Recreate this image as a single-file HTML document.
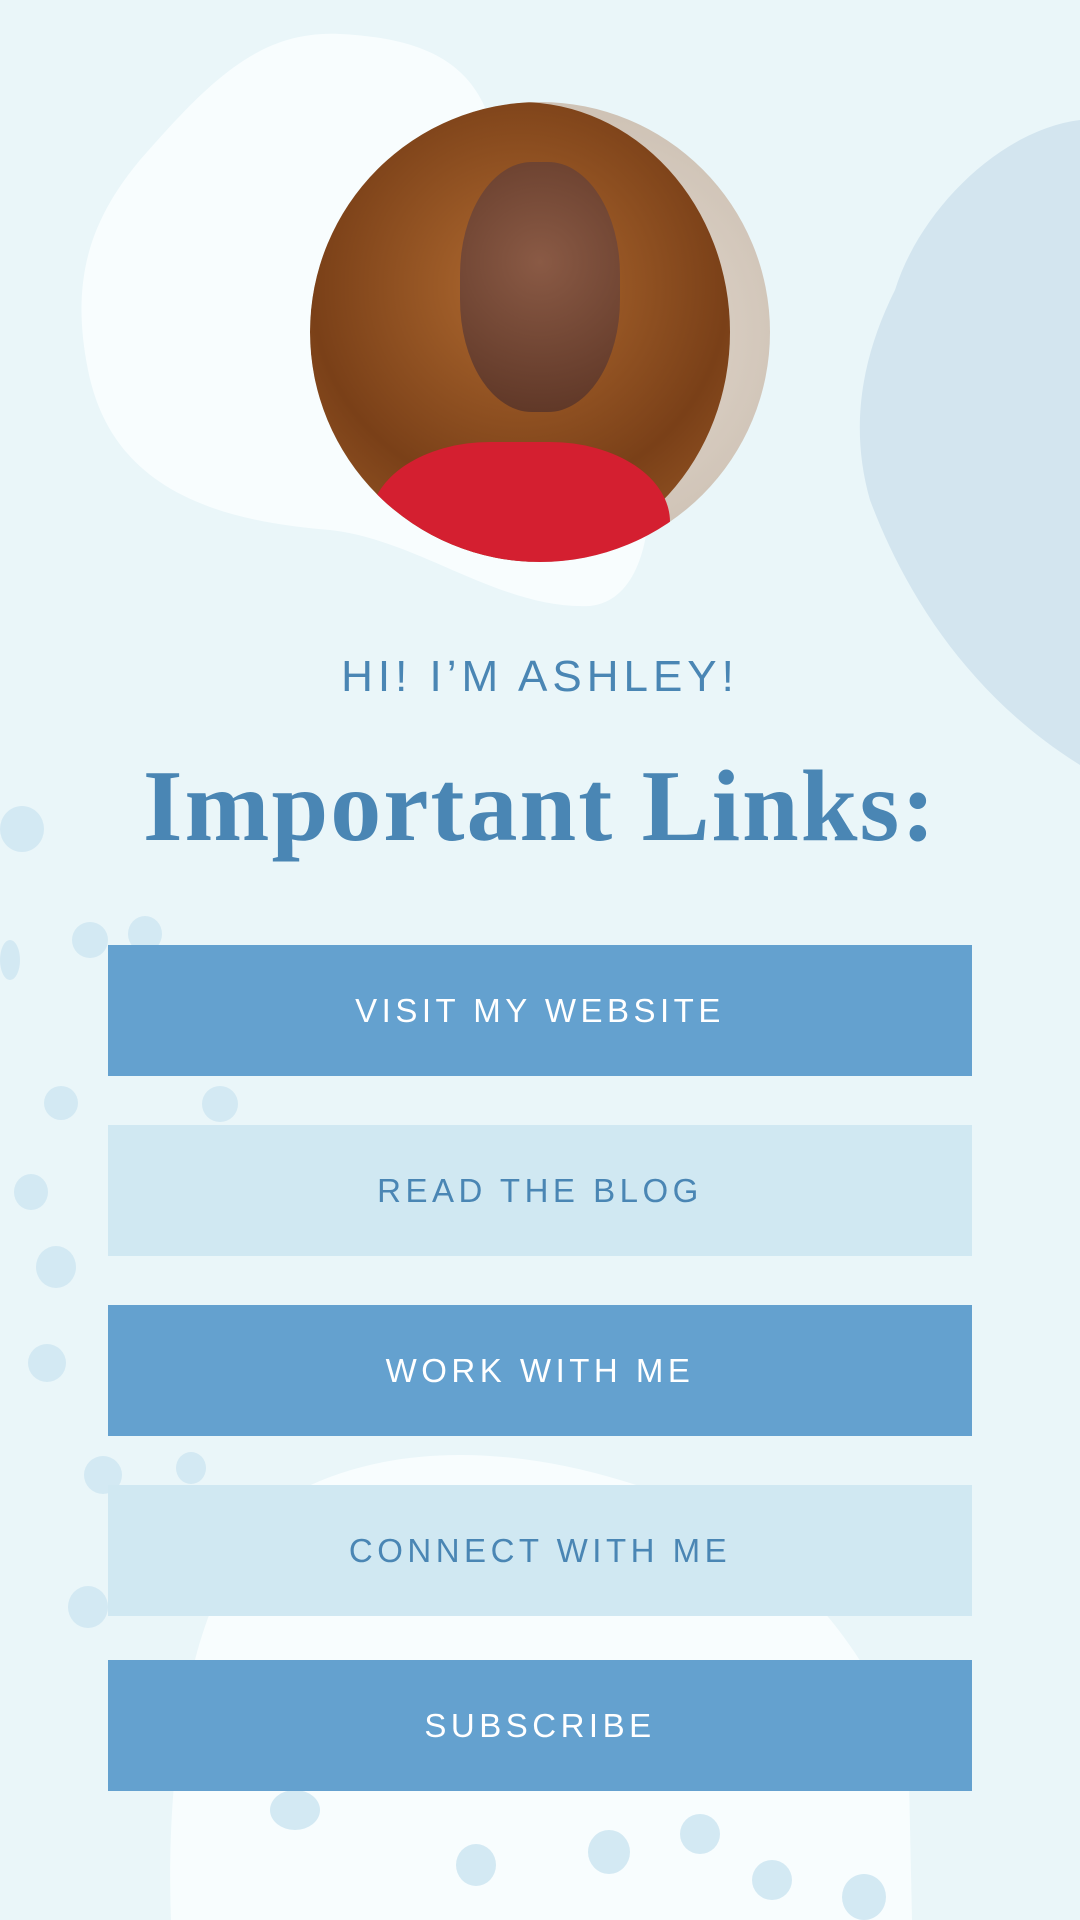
<!DOCTYPE html>
<html><head><meta charset="utf-8"><style>
*{margin:0;padding:0;box-sizing:border-box}
body{width:1080px;height:1920px;background:#eaf6f9;position:relative;overflow:hidden;font-family:"Liberation Sans",sans-serif}
.abs{position:absolute}
.btn{position:absolute;left:108px;width:864px;height:131px;display:flex;align-items:center;justify-content:center;font-size:33px;letter-spacing:4.5px}
.d{background:#64a1cf;color:#fff}
.l{background:#d0e8f2;color:#4a86b4}
.dot{position:absolute;background:#d3e9f3;border-radius:50%}
</style></head><body>
<svg class="abs" style="left:0;top:0" width="1080" height="1920">
<path d="M140 160 C210 80 260 30 340 34 C420 38 470 60 490 120 C520 200 600 300 640 420 C660 500 650 600 590 606 C500 610 420 540 330 530 C200 520 110 480 88 370 C70 280 90 220 140 160Z" fill="#f8fdfe"/>
<path d="M1080 120 C1000 130 920 210 895 290 C860 360 850 430 870 500 C900 580 960 690 1080 765Z" fill="#d3e5ef"/>
<path d="M171 1920 C165 1760 190 1560 300 1490 C400 1440 520 1450 620 1480 C760 1520 880 1640 909 1780 L912 1920Z" fill="#f8fdfe"/>
</svg>
<div class="dot" style="left:0;top:806px;width:44px;height:46px"></div>
<div class="dot" style="left:72px;top:922px;width:36px;height:36px"></div>
<div class="dot" style="left:128px;top:916px;width:34px;height:36px"></div>
<div class="dot" style="left:0;top:940px;width:20px;height:40px"></div>
<div class="dot" style="left:44px;top:1086px;width:34px;height:34px"></div>
<div class="dot" style="left:202px;top:1086px;width:36px;height:36px"></div>
<div class="dot" style="left:14px;top:1174px;width:34px;height:36px"></div>
<div class="dot" style="left:36px;top:1246px;width:40px;height:42px"></div>
<div class="dot" style="left:28px;top:1344px;width:38px;height:38px"></div>
<div class="dot" style="left:84px;top:1456px;width:38px;height:38px"></div>
<div class="dot" style="left:176px;top:1452px;width:30px;height:32px"></div>
<div class="dot" style="left:68px;top:1586px;width:40px;height:42px"></div>
<div class="dot" style="left:270px;top:1790px;width:50px;height:40px"></div>
<div class="dot" style="left:456px;top:1844px;width:40px;height:42px"></div>
<div class="dot" style="left:588px;top:1830px;width:42px;height:44px"></div>
<div class="dot" style="left:680px;top:1814px;width:40px;height:40px"></div>
<div class="dot" style="left:752px;top:1860px;width:40px;height:40px"></div>
<div class="dot" style="left:842px;top:1874px;width:44px;height:46px"></div>
<div class="abs" style="left:310px;top:102px;width:460px;height:460px;border-radius:50%;overflow:hidden;background:radial-gradient(circle at 60% 50%,#e6dcd2 0,#cfc3b6 60%);">
 <div class="abs" style="left:0;top:0;width:420px;height:460px;border-radius:50%;background:radial-gradient(circle at 50% 40%,#b06a30,#7a4018 60%,#a2602a)"></div>
 <div class="abs" style="left:150px;top:60px;width:160px;height:250px;border-radius:45%;background:radial-gradient(circle at 50% 40%,#8a5a45,#5b3424)"></div>
 <div class="abs" style="left:60px;top:340px;width:300px;height:200px;border-radius:40% 40% 0 0;background:#d41f30"></div>
</div>
<div class="abs" style="left:0;width:1080px;top:652px;text-align:center;font-size:44px;letter-spacing:5px;color:#4a86b4">HI! I’M ASHLEY!</div>
<div class="abs" style="left:0;width:1080px;top:748px;text-align:center;font-family:'Liberation Serif',serif;font-weight:bold;font-size:102px;letter-spacing:2px;color:#4a86b4">Important Links:</div>
<div class="btn d" style="top:945px">VISIT MY WEBSITE</div>
<div class="btn l" style="top:1125px">READ THE BLOG</div>
<div class="btn d" style="top:1305px">WORK WITH ME</div>
<div class="btn l" style="top:1485px">CONNECT WITH ME</div>
<div class="btn d" style="top:1660px">SUBSCRIBE</div>
</body></html>
